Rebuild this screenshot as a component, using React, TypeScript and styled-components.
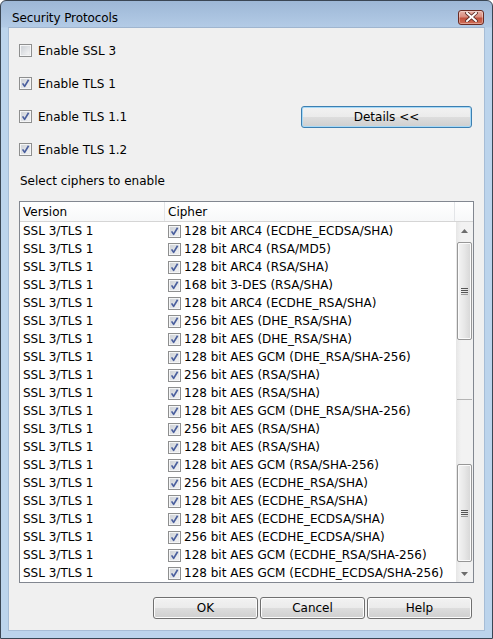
import styled, { createGlobalStyle } from "styled-components";

const GlobalStyle = createGlobalStyle`
  html, body {
    margin: 0;
    padding: 0;
    background: #ffffff;
  }
  body {
    font-family: "DejaVu Sans", "Liberation Sans", sans-serif;
    font-size: 12px;
    color: #000000;
  }
  * {
    box-sizing: border-box;
  }
`;

const versions = "SSL 3/TLS 1";

const ciphers = [
  "128 bit ARC4 (ECDHE_ECDSA/SHA)",
  "128 bit ARC4 (RSA/MD5)",
  "128 bit ARC4 (RSA/SHA)",
  "168 bit 3-DES (RSA/SHA)",
  "128 bit ARC4 (ECDHE_RSA/SHA)",
  "256 bit AES (DHE_RSA/SHA)",
  "128 bit AES (DHE_RSA/SHA)",
  "128 bit AES GCM (DHE_RSA/SHA-256)",
  "256 bit AES (RSA/SHA)",
  "128 bit AES (RSA/SHA)",
  "128 bit AES GCM (DHE_RSA/SHA-256)",
  "256 bit AES (RSA/SHA)",
  "128 bit AES (RSA/SHA)",
  "128 bit AES GCM (RSA/SHA-256)",
  "256 bit AES (ECDHE_RSA/SHA)",
  "128 bit AES (ECDHE_RSA/SHA)",
  "128 bit AES (ECDHE_ECDSA/SHA)",
  "256 bit AES (ECDHE_ECDSA/SHA)",
  "128 bit AES GCM (ECDHE_RSA/SHA-256)",
  "128 bit AES GCM (ECDHE_ECDSA/SHA-256)",
];

const Window = styled.div`
  width: 493px;
  height: 639px;
  border: 1px solid #3a4654;
  border-radius: 6px 6px 0 0;
  background: linear-gradient(to bottom, #9db7d6 0px, #b3cbe6 26px, #bcd4ec 27px, #bcd4ec 100%);
  display: flex;
  flex-direction: column;
`;

const TitleBar = styled.div`
  height: 26px;
  padding: 6px 8px 0 11px;
  display: flex;
  align-items: center;
  justify-content: space-between;
`;

const Title = styled.span`
  font-size: 12px;
  color: #000000;
  letter-spacing: -0.1px;
  padding-top: 1px;
`;

const CloseButton = styled.div`
  width: 26px;
  height: 15px;
  border: 1px solid #6a2a22;
  border-radius: 3px;
  background: linear-gradient(to bottom, #e8b3a8 0%, #d98c7e 45%, #c2513d 55%, #cf6e57 100%);
  display: flex;
  align-items: center;
  justify-content: center;
  box-shadow: inset 0 0 0 1px rgba(255, 255, 255, 0.35);
`;

const Content = styled.div`
  flex: 1;
  margin: 0 7px 7px 7px;
  background: #f0f0f0;
  border: 1px solid #a7bdd6;
  border-top-color: #9fb5cf;
  padding: 6px 12px 11px 10px;
  display: flex;
  flex-direction: column;
`;

const OptionRow = styled.div`
  height: 33px;
  display: flex;
  align-items: center;
  justify-content: space-between;
`;

const CheckLabel = styled.label`
  display: flex;
  align-items: center;
  gap: 6px;
`;

const CheckBox = styled.svg`
  width: 13px;
  height: 13px;
  flex: 0 0 13px;
  display: block;
`;

const Button = styled.div<{ $focused?: boolean; $width: number }>`
  width: ${(p) => p.$width}px;
  height: 22px;
  border: 1px solid ${(p) => (p.$focused ? "#3c7fb1" : "#707070")};
  border-radius: 3px;
  background: linear-gradient(to bottom, #f2f2f2 0%, #ebebeb 50%, #dddddd 51%, #cfcfcf 100%);
  box-shadow: inset 0 0 0 1px ${(p) => (p.$focused ? "#a6d9f7" : "#fcfcfc")};
  display: flex;
  align-items: center;
  justify-content: center;
  font-size: 12px;
`;

const SectionLabel = styled.div`
  margin-top: 6px;
  height: 18px;
  line-height: 18px;
  padding-left: 1px;
`;

const Table = styled.div`
  margin-top: 11px;
  width: 455px;
  height: 382px;
  border: 1px solid #828790;
  background: #ffffff;
  display: flex;
  flex-direction: column;
`;

const HeaderRow = styled.div`
  height: 20px;
  display: grid;
  grid-template-columns: 145px 1fr 18px;
  border-bottom: 1px solid #d5d5d5;
  background: linear-gradient(to bottom, #ffffff 0%, #f7f8f9 100%);
`;

const HeaderCell = styled.div`
  border-right: 1px solid #e3e5e8;
  padding-left: 3px;
  display: flex;
  align-items: center;
  &:last-child {
    border-right: none;
  }
`;

const TableBody = styled.div`
  flex: 1;
  display: flex;
`;

const Rows = styled.div`
  flex: 1;
  display: flex;
  flex-direction: column;
`;

const Row = styled.div`
  height: 18px;
  display: grid;
  grid-template-columns: 145px 1fr;
`;

const Cell = styled.div`
  padding-left: 3px;
  display: flex;
  align-items: center;
  gap: 3px;
  white-space: nowrap;
  overflow: hidden;
`;

const ScrollBar = styled.div`
  width: 17px;
  display: flex;
  flex-direction: column;
  background: linear-gradient(to right, #e6e6e6 0%, #f2f2f2 30%, #f2f2f2 100%);
`;

const Arrow = styled.div`
  height: 17px;
  display: flex;
  align-items: center;
  justify-content: center;
`;

const Track = styled.div`
  flex: 1;
  display: flex;
  flex-direction: column;
  padding: 3px 1px 2px 1px;
`;

const Thumb = styled.div<{ $top: number }>`
  margin-top: ${(p) => p.$top}px;
  height: 98px;
  border: 1px solid #979797;
  border-radius: 2px;
  background: linear-gradient(to right, #f4f4f4 0%, #e7e7e7 50%, #d6d6d6 100%);
  box-shadow: inset 0 0 0 1px #fbfbfb;
  display: flex;
  align-items: center;
  justify-content: center;
`;

const TrackLine = styled.div<{ $top: number }>`
  margin-top: ${(p) => p.$top}px;
  height: 1px;
  background: #b4b4b4;
`;

const ButtonBar = styled.div`
  margin-top: 14px;
  display: flex;
  justify-content: flex-end;
  gap: 2px;
`;

function Check({ checked }: { checked: boolean }) {
  return (
    <CheckBox viewBox="0 0 13 13">
      <defs>
        <linearGradient id="cbfill" x1="0" y1="0" x2="1" y2="1">
          <stop offset="0" stopColor="#cbcfd5" />
          <stop offset="1" stopColor="#f7f7f7" />
        </linearGradient>
      </defs>
      <rect x="0.5" y="0.5" width="12" height="12" fill="#ffffff" stroke="#8e8f8f" />
      <rect x="2" y="2" width="9" height="9" fill="url(#cbfill)" stroke="#dadce0" strokeWidth="0.6" />
      {checked && (
        <path d="M3.6 6.4 L5.6 9.4 L9.6 2.8" fill="none" stroke="#4a5f9e" strokeWidth="1.7" strokeLinejoin="round" />
      )}
    </CheckBox>
  );
}

function Grip() {
  return (
    <svg width="7" height="7" viewBox="0 0 7 7">
      {[0.5, 2.5, 4.5, 6.5].map((y) => (
        <line key={y} x1="0" y1={y} x2="7" y2={y} stroke={y === 6.5 ? "#9a9a9a" : "#555555"} strokeWidth="1" />
      ))}
    </svg>
  );
}

export default function App() {
  return (
    <>
      <GlobalStyle />
      <Window>
        <TitleBar>
          <Title>Security Protocols</Title>
          <CloseButton>
            <svg width="13" height="10" viewBox="0 0 13 10">
              <path d="M2 1 L11 9 M11 1 L2 9" stroke="#5a2a24" strokeWidth="3.6" strokeLinecap="square" />
              <path d="M2 1 L11 9 M11 1 L2 9" stroke="#ffffff" strokeWidth="2" strokeLinecap="square" />
            </svg>
          </CloseButton>
        </TitleBar>
        <Content>
          <OptionRow>
            <CheckLabel>
              <Check checked={false} />
              Enable SSL 3
            </CheckLabel>
          </OptionRow>
          <OptionRow>
            <CheckLabel>
              <Check checked />
              Enable TLS 1
            </CheckLabel>
          </OptionRow>
          <OptionRow>
            <CheckLabel>
              <Check checked />
              Enable TLS 1.1
            </CheckLabel>
            <Button $focused $width={171}>Details &lt;&lt;</Button>
          </OptionRow>
          <OptionRow>
            <CheckLabel>
              <Check checked />
              Enable TLS 1.2
            </CheckLabel>
          </OptionRow>
          <SectionLabel>Select ciphers to enable</SectionLabel>
          <Table>
            <HeaderRow>
              <HeaderCell>Version</HeaderCell>
              <HeaderCell>Cipher</HeaderCell>
              <HeaderCell />
            </HeaderRow>
            <TableBody>
              <Rows>
                {ciphers.map((c, i) => (
                  <Row key={i}>
                    <Cell>{versions}</Cell>
                    <Cell>
                      <Check checked />
                      {c}
                    </Cell>
                  </Row>
                ))}
              </Rows>
              <ScrollBar>
                <Arrow>
                  <svg width="7" height="4" viewBox="0 0 7 4">
                    <path d="M0 4 L3.5 0 L7 4 Z" fill="#6d6d6d" />
                  </svg>
                </Arrow>
                <Track>
                  <Thumb $top={0}>
                    <Grip />
                  </Thumb>
                  <TrackLine $top={59} />
                  <Thumb $top={64}>
                    <Grip />
                  </Thumb>
                </Track>
                <Arrow>
                  <svg width="7" height="4" viewBox="0 0 7 4">
                    <path d="M0 0 L3.5 4 L7 0 Z" fill="#6d6d6d" />
                  </svg>
                </Arrow>
              </ScrollBar>
            </TableBody>
          </Table>
          <ButtonBar>
            <Button $width={105}>OK</Button>
            <Button $width={105}>Cancel</Button>
            <Button $width={105}>Help</Button>
          </ButtonBar>
        </Content>
      </Window>
    </>
  );
}
